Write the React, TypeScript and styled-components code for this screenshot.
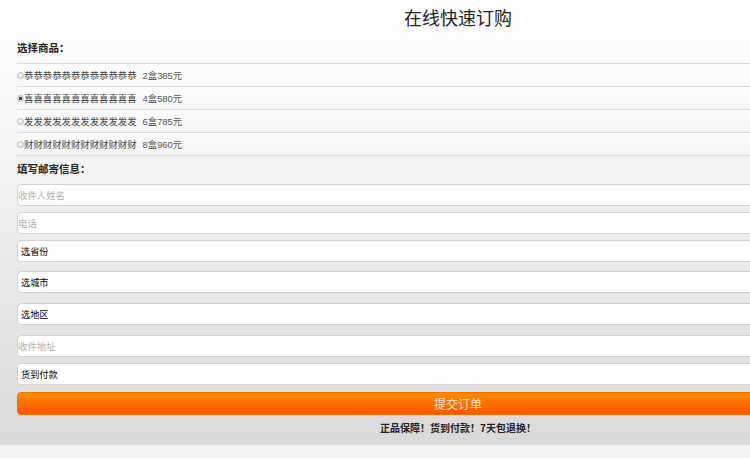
import React, { useState } from 'react'
import styled, { createGlobalStyle } from 'styled-components'

const GlobalStyle = createGlobalStyle`
  html, body {
    margin: 0;
    padding: 0;
    overflow-x: hidden;
    background: #f3f3f3;
    font-family: "Noto Sans CJK SC", "Liberation Sans", sans-serif;
  }
`

const Page = styled.div`
  background: linear-gradient(#ffffff 0%, #f4f4f4 35%, #e6e6e6 70%, #d9d9d9 100%);
  padding-bottom: 7px;
`

const Form = styled.div`
  width: 882px;
  margin-left: 17px;
  display: flex;
  flex-direction: column;
`

const Title = styled.h1`
  margin: 0;
  padding-top: 3px;
  height: 29px;
  line-height: 29px;
  text-align: center;
  font-size: 18px;
  font-weight: normal;
  color: #222;
`

const SectionLabel = styled.div<{ $top: number; $bottom: number }>`
  margin: ${p => p.$top}px 0 ${p => p.$bottom}px;
  line-height: 20px;
  font-size: 10.5px;
  font-weight: bold;
  color: #222;
`

const OptionList = styled.div`
  border-top: 1px solid #dcdcdc;
`

const OptionRow = styled.label`
  display: flex;
  align-items: center;
  height: 22px;
  border-bottom: 1px solid #dcdcdc;
  background: linear-gradient(rgba(255, 255, 255, 0.55), rgba(255, 255, 255, 0));
  font-size: 9.4px;
  color: #555;
  cursor: pointer;
`

const Radio = styled.input`
  appearance: none;
  margin: 0;
  width: 7px;
  height: 7px;
  border-radius: 50%;
  border: 1px solid #b8b8b8;
  background: radial-gradient(circle at 40% 35%, #ffffff, #dcdcdc);
  box-sizing: border-box;
  &:checked {
    background: radial-gradient(circle, #444 0 1.5px, #e6e6e6 2px);
  }
`

const ItemName = styled.span`
  margin-left: 0;
  color: #444;
`

const Price = styled.span`
  margin-left: 6px;
  font-family: "Liberation Sans", "Noto Sans CJK SC", sans-serif;
`

const PriceUnit = styled.span`
  font-family: "Noto Sans CJK SC", sans-serif;
`

const TextField = styled.input<{ $after: number }>`
  box-sizing: border-box;
  height: 22px;
  margin: 0 0 ${p => p.$after}px;
  padding: 0;
  border: 1px solid #d2d2d2;
  border-radius: 4px;
  background: #fff;
  font-family: inherit;
  font-size: 9.4px;
  color: #333;
  outline: none;
  &::placeholder {
    color: #b0b0b0;
  }
`

const SelectField = styled.select<{ $after: number }>`
  box-sizing: border-box;
  appearance: none;
  height: 22px;
  margin: 0 0 ${p => p.$after}px;
  padding: 0 0 0 3px;
  border: 1px solid #d2d2d2;
  border-radius: 4px;
  background: #fff;
  font-family: inherit;
  font-size: 9.2px;
  color: #000;
  outline: none;
`

const SubmitButton = styled.button`
  box-sizing: border-box;
  height: 23px;
  border: 1px solid #f07000;
  border-radius: 4px;
  background: linear-gradient(#ff8a00, #ff5500);
  color: #fde3cc;
  font-family: inherit;
  font-size: 12px;
  line-height: 21px;
  padding: 0;
  text-align: center;
`

const Guarantee = styled.div`
  margin-top: 3px;
  line-height: 20px;
  text-align: center;
  font-size: 10px;
  font-weight: bold;
  color: #222;
`

const products = [
  { name: '恭恭恭恭恭恭恭恭恭恭恭恭', boxes: 2, price: 385 },
  { name: '喜喜喜喜喜喜喜喜喜喜喜喜', boxes: 4, price: 580 },
  { name: '发发发发发发发发发发发发', boxes: 6, price: 785 },
  { name: '财财财财财财财财财财财财', boxes: 8, price: 960 },
]

const App = () => {
  const [selected, setSelected] = useState(1)
  return (
    <>
      <GlobalStyle />
      <Page>
        <Form>
          <Title>在线快速订购</Title>
          <SectionLabel $top={6} $bottom={5}>选择商品：</SectionLabel>
          <OptionList>
            {products.map((p, i) => (
              <OptionRow key={p.name}>
                <Radio type="radio" name="product" checked={selected === i} onChange={() => setSelected(i)} />
                <ItemName>{p.name}</ItemName>
                <Price>{p.boxes}<PriceUnit>盒</PriceUnit>{p.price}<PriceUnit>元</PriceUnit></Price>
              </OptionRow>
            ))}
          </OptionList>
          <SectionLabel $top={3} $bottom={5}>填写邮寄信息：</SectionLabel>
          <TextField $after={6} placeholder="收件人姓名" />
          <TextField $after={6} placeholder="电话" />
          <SelectField $after={9} defaultValue="">
            <option value="">选省份</option>
          </SelectField>
          <SelectField $after={10} defaultValue="">
            <option value="">选城市</option>
          </SelectField>
          <SelectField $after={10} defaultValue="">
            <option value="">选地区</option>
          </SelectField>
          <TextField $after={6} placeholder="收件地址" />
          <SelectField $after={7} defaultValue="cod">
            <option value="cod">货到付款</option>
          </SelectField>
          <SubmitButton>提交订单</SubmitButton>
          <Guarantee>正品保障！货到付款！7天包退换！</Guarantee>
        </Form>
      </Page>
    </>
  )
}

export default App
